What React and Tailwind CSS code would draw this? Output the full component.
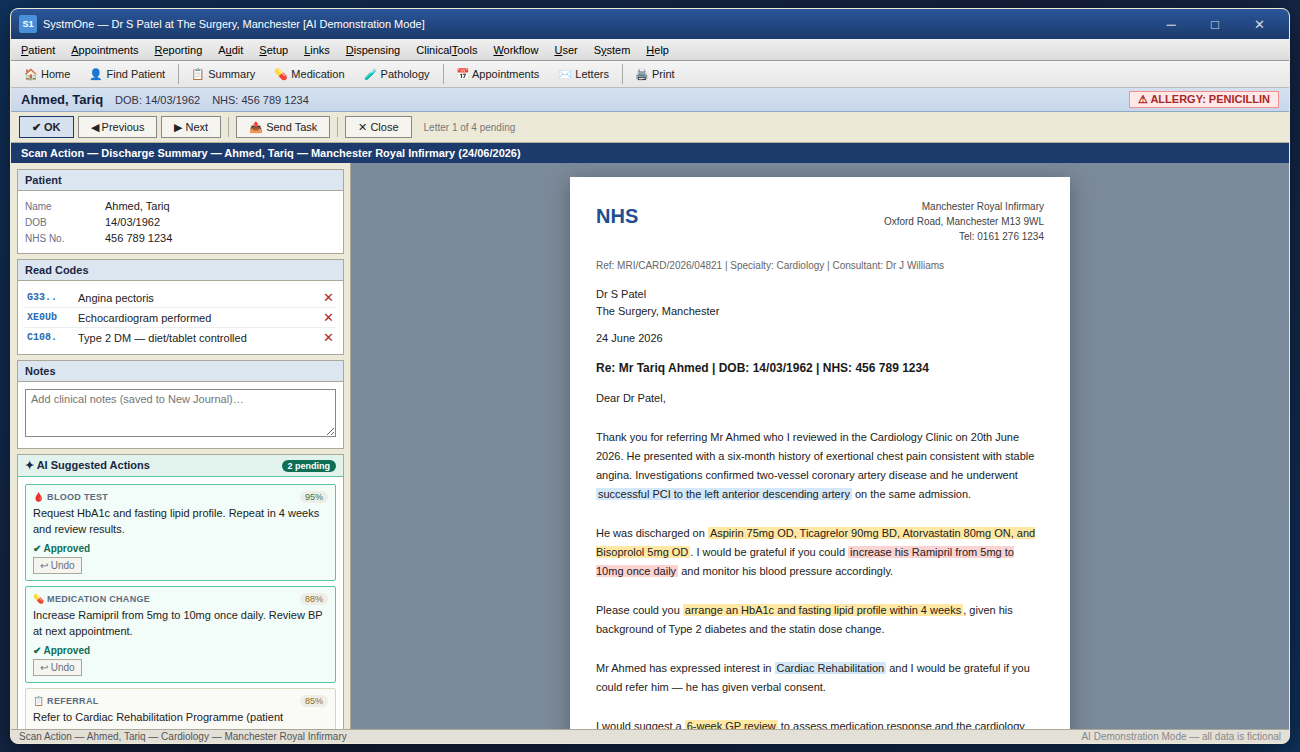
// ── src/App.jsx ──────────────────────────────────────────
import { useState } from 'react'
import clsx from 'clsx'

// [text before the access key, access key, rest]
const MENUS = [
  ['', 'P', 'atient'],
  ['', 'A', 'ppointments'],
  ['', 'R', 'eporting'],
  ['A', 'u', 'dit'],
  ['', 'S', 'etup'],
  ['', 'L', 'inks'],
  ['', 'D', 'ispensing'],
  ['Clinical', 'T', 'ools'],
  ['', 'W', 'orkflow'],
  ['', 'U', 'ser'],
  ['S', 'y', 'stem'],
  ['', 'H', 'elp'],
]

const TOOL_GROUPS = [
  ['🏠 Home', '👤 Find Patient'],
  ['📋 Summary', '💊 Medication', '🧪 Pathology'],
  ['📅 Appointments', '✉️ Letters'],
  ['🖨️ Print'],
]

const PATIENT = [
  ['Name', 'Ahmed, Tariq'],
  ['DOB', '14/03/1962'],
  ['NHS No.', '456 789 1234'],
]

const READ_CODES = [
  { code: 'G33..', term: 'Angina pectoris' },
  { code: 'XE0Ub', term: 'Echocardiogram performed' },
  { code: 'C108.', term: 'Type 2 DM — diet/tablet controlled' },
]

const ACTIONS = [
  {
    id: 1,
    type: '🩸 BLOOD TEST',
    score: 95,
    text: 'Request HbA1c and fasting lipid profile. Repeat in 4 weeks and review results.',
    approved: true,
  },
  {
    id: 2,
    type: '💊 MEDICATION CHANGE',
    score: 88,
    text: 'Increase Ramipril from 5mg to 10mg once daily. Review BP at next appointment.',
    approved: true,
  },
  {
    id: 3,
    type: '📋 REFERRAL',
    score: 85,
    text: 'Refer to Cardiac Rehabilitation Programme (patient consented).',
    approved: false,
  },
]

function TitleBar() {
  return (
    <header className="flex h-[30px] shrink-0 items-center gap-1.5 bg-linear-to-b from-[#2a5699] to-[#1c3a6b] px-2 text-white">
      <span className="flex size-[18px] items-center justify-center rounded-xs bg-[#4a90d9] text-[9px] font-bold">
        S1
      </span>
      <h1 className="flex-1 truncate">
        SystmOne — Dr S Patel at The Surgery, Manchester [AI Demonstration Mode]
      </h1>
      <div className="flex h-full text-[13px] text-white/80">
        <button type="button" aria-label="Minimise" className="w-11">─</button>
        <button type="button" aria-label="Maximise" className="w-11">□</button>
        <button type="button" aria-label="Close window" className="w-11">✕</button>
      </div>
    </header>
  )
}

function MenuBar() {
  return (
    <nav className="flex h-[22px] shrink-0 items-center border-b border-[#999] bg-linear-to-b from-[#f0f0f0] to-[#dcdcdc] px-0.5 pt-0.5 text-black">
      {MENUS.map(([before, key, after]) => (
        <button key={before + key + after} type="button" className="px-2">
          {before}
          <u>{key}</u>
          {after}
        </button>
      ))}
    </nav>
  )
}

function ToolBar() {
  return (
    <div className="flex h-[27px] shrink-0 items-center gap-0.5 border-b border-[#bbb] bg-linear-to-b from-[#f5f5f5] to-[#e6e6e6] px-1">
      {TOOL_GROUPS.map((group, i) => (
        <div key={group[0]} className="flex items-center gap-px">
          {i > 0 && <span className="mx-0.5 h-5 w-px bg-[#aaa]" />}
          {group.map((label) => (
            <button key={label} type="button" className="px-[9px]">
              {label}
            </button>
          ))}
        </div>
      ))}
    </div>
  )
}

function PatientBar() {
  return (
    <div className="flex h-6 shrink-0 items-center justify-between border-b border-[#8fa8c8] bg-linear-to-b from-[#d6e1f0] to-[#c6d7ea] px-2.5 text-[#334]">
      <div className="flex items-baseline gap-3">
        <strong className="text-[13px] text-[#12203c]">Ahmed, Tariq</strong>
        <span>DOB: 14/03/1962</span>
        <span>NHS: 456 789 1234</span>
      </div>
      <strong className="border border-[#f09090] bg-[#ffe8e8] px-2 leading-[15px] text-[#a82828]">
        ⚠ ALLERGY: PENICILLIN
      </strong>
    </div>
  )
}

function ActionButton({ primary, children }) {
  return (
    <button
      type="button"
      className={clsx(
        'h-[22px] border px-3',
        primary
          ? 'border-[#1c3a6b] bg-[#d6e1f0] font-bold'
          : 'border-[#888] bg-[#f5f4ee]'
      )}
    >
      {children}
    </button>
  )
}

function ActionBar() {
  return (
    <div className="flex h-[31px] shrink-0 items-center gap-1 border-b border-[#b5b099] bg-[#ece9d8] px-2">
      <ActionButton primary>✔ OK</ActionButton>
      <ActionButton>◀ Previous</ActionButton>
      <ActionButton>▶ Next</ActionButton>
      <span className="mx-[3px] h-5 w-px bg-[#aaa]" />
      <ActionButton>📤 Send Task</ActionButton>
      <span className="mx-[3px] h-5 w-px bg-[#aaa]" />
      <ActionButton>✕ Close</ActionButton>
      <span className="ml-2 text-[10px] text-[#777]">Letter 1 of 4 pending</span>
    </div>
  )
}

function Panel({ title, children }) {
  return (
    <section className="shrink-0 border border-[#aca899] bg-white">
      <h2 className="h-[21px] border-b border-[#aca899] bg-[#dce6f0] px-[7px] leading-5 font-bold text-[#1a2744]">
        {title}
      </h2>
      <div className="p-[7px]">{children}</div>
    </section>
  )
}

function ReadCodes() {
  const [codes, setCodes] = useState(READ_CODES)

  return (
    <table className="w-full border-separate border-spacing-0">
      <tbody>
        {codes.map(({ code, term }) => (
          <tr
            key={code}
            className="h-5 last:h-[19px] [&>td]:border-b [&>td]:border-[#eee] last:[&>td]:border-b-0"
          >
            <td className="w-[53px] pl-0.5 font-['Liberation_Mono',monospace] text-[10px] leading-3 font-bold text-[#2a6ab0]">
              {code}
            </td>
            <td className="leading-4">{term}</td>
            <td className="w-5 pr-0.5 text-right leading-4">
              <button
                type="button"
                aria-label={`Remove ${term}`}
                className="block w-full text-right text-[13px] leading-4 text-[#b02a2a]"
                onClick={() => setCodes(codes.filter((c) => c.code !== code))}
              >
                ✕
              </button>
            </td>
          </tr>
        ))}
      </tbody>
    </table>
  )
}

function ActionCard({ action, onToggle }) {
  const { type, score, text, approved } = action

  return (
    <li
      className={clsx(
        'rounded-xs border px-[7px] py-1.5',
        approved ? 'border-[#5bc4a0] bg-[#f2fdf9]' : 'border-[#d8d5c4] bg-[#fafaf6]'
      )}
    >
      <div className="mb-0.5 flex h-3 items-center justify-between text-[9px] leading-3">
        <span className="font-bold tracking-[0.3px] text-[#5a6a80]">{type}</span>
        <span
          className={clsx(
            'rounded-full bg-[#eeede6] px-[5px]',
            score >= 90 ? 'text-[#2f7a5a]' : 'text-[#92701a]'
          )}
        >
          {score}%
        </span>
      </div>
      <p className="leading-4">{text}</p>
      {approved && (
        <p className="mt-[5px] text-[10px] leading-[13px] font-bold text-[#0f6e56]">✔ Approved</p>
      )}
      <button
        type="button"
        onClick={onToggle}
        className="mt-0.5 block h-[17px] border border-[#aca899] bg-[#f5f4ee] px-1.5 text-[10px] leading-[15px] text-[#667085]"
      >
        {approved ? '↩ Undo' : '✔ Approve'}
      </button>
    </li>
  )
}

function SuggestedActions() {
  const [actions, setActions] = useState(ACTIONS)

  const toggle = (id) =>
    setActions(actions.map((a) => (a.id === id ? { ...a, approved: !a.approved } : a)))

  return (
    <section className="shrink-0 border border-[#aca899] bg-white">
      <div className="flex h-[22px] items-center justify-between border-b border-[#5bc4a0] bg-[#e1f3ec] px-[7px]">
        <h2 className="font-bold text-[#1a2744]">✦ AI Suggested Actions</h2>
        <span className="rounded-full bg-[#0f6e56] px-1.5 text-[9px] leading-3 font-bold text-white">
          2 pending
        </span>
      </div>
      <ul className="space-y-[5px] p-[7px]">
        {actions.map((action) => (
          <ActionCard key={action.id} action={action} onToggle={() => toggle(action.id)} />
        ))}
      </ul>
    </section>
  )
}

function Sidebar() {
  return (
    <aside className="flex w-[340px] shrink-0 flex-col gap-[5px] overflow-y-auto border-r border-[#aca899] bg-[#ece9d8] p-1.5 [scrollbar-width:none]">
      <Panel title="Patient">
        <dl>
          {PATIENT.map(([label, value]) => (
            <div key={label} className="flex h-4 items-baseline leading-4">
              <dt className="w-20 text-[10px] text-[#667085]">{label}</dt>
              <dd>{value}</dd>
            </div>
          ))}
        </dl>
      </Panel>
      <Panel title="Read Codes">
        <ReadCodes />
      </Panel>
      <Panel title="Notes">
        <textarea
          aria-label="Notes"
          placeholder="Add clinical notes (saved to New Journal)…"
          className="mb-1 block h-12 w-full resize-y border border-[#888] bg-white px-[5px] py-[3px] placeholder:text-[#757575]"
        />
      </Panel>
      <SuggestedActions />
    </aside>
  )
}

const MARKS = {
  blue: 'bg-[#d4e8fc]',
  amber: 'bg-[#ffe8a3]',
  red: 'bg-[#fbd3d3]',
}

function Mark({ tone, children }) {
  return <mark className={clsx('rounded-[1px] px-0.5 text-inherit', MARKS[tone])}>{children}</mark>
}

function Letter() {
  return (
    <article className="mx-auto w-full max-w-[500px] bg-white px-[26px] py-[22px] text-[#222] shadow-[0_4px_20px_rgba(0,0,0,0.3)]">
      <div className="flex items-start justify-between">
        <span className="text-xl leading-[34px] font-bold text-[#1d4f91]">NHS</span>
        <address className="text-right text-[10px] leading-[15px] text-[#444] not-italic">
          Manchester Royal Infirmary
          <br />
          Oxford Road, Manchester M13 9WL
          <br />
          Tel: 0161 276 1234
        </address>
      </div>
      <p className="mt-3.5 text-[10px] leading-4 text-[#666]">
        Ref: MRI/CARD/2026/04821 | Specialty: Cardiology | Consultant: Dr J Williams
      </p>
      <p className="mt-3 leading-[17px]">
        Dr S Patel
        <br />
        The Surgery, Manchester
      </p>
      <p className="mt-2.5 leading-[17px]">24 June 2026</p>
      <h2 className="mt-3 text-xs leading-[19px] font-bold text-[#1a1a1a]">
        Re: Mr Tariq Ahmed | DOB: 14/03/1962 | NHS: 456 789 1234
      </h2>
      <div className="mt-[11px] space-y-5 leading-[19px]">
        <p>Dear Dr Patel,</p>
        <p>
          Thank you for referring Mr Ahmed who I reviewed in the Cardiology Clinic on 20th June
          2026. He presented with a six-month history of exertional chest pain consistent with
          stable angina. Investigations confirmed two-vessel coronary artery disease and he
          underwent <Mark tone="blue">successful PCI to the left anterior descending artery</Mark>{' '}
          on the same admission.
        </p>
        <p>
          He was discharged on{' '}
          <Mark tone="amber">
            Aspirin 75mg OD, Ticagrelor 90mg BD, Atorvastatin 80mg ON, and Bisoprolol 5mg OD
          </Mark>
          . I would be grateful if you could{' '}
          <Mark tone="red">increase his Ramipril from 5mg to 10mg once daily</Mark> and monitor his
          blood pressure accordingly.
        </p>
        <p>
          Please could you{' '}
          <Mark tone="amber">arrange an HbA1c and fasting lipid profile within 4 weeks</Mark>, given
          his background of Type 2 diabetes and the statin dose change.
        </p>
        <p>
          Mr Ahmed has expressed interest in <Mark tone="blue">Cardiac Rehabilitation</Mark> and I
          would be grateful if you could refer him — he has given verbal consent.
        </p>
        <p>
          I would suggest a <Mark tone="amber">6-week GP review</Mark> to assess medication response
          and the cardiology team will see him again in clinic.
        </p>
        <p>Yours sincerely,</p>
      </div>
    </article>
  )
}

export default function App() {
  return (
    <div className="h-screen bg-linear-135 from-[#0f3460] via-[#16213e] to-[#0f3460] px-2.5 py-2 font-['Liberation_Sans',Arial,sans-serif] text-[11px] leading-[13px] text-[#222]">
      <div className="flex h-full flex-col overflow-hidden rounded-lg border border-[#ece9d8] bg-[#ece9d8] shadow-[0_8px_40px_rgba(0,0,0,0.6)]">
        <TitleBar />
        <MenuBar />
        <ToolBar />
        <PatientBar />
        <ActionBar />
        <div className="h-5 shrink-0 bg-[#1c3a6b] px-2.5 leading-5 font-bold text-white">
          Scan Action — Discharge Summary — Ahmed, Tariq — Manchester Royal Infirmary (24/06/2026)
        </div>
        <div className="flex min-h-0 flex-1">
          <Sidebar />
          <main className="flex-1 overflow-y-auto bg-[#7b8a9a] py-3.5 [scrollbar-width:none]">
            <Letter />
          </main>
        </div>
        <footer className="flex h-3.5 shrink-0 justify-between border-t border-[#aca899] bg-[#e3e0d8] px-2 text-[10px] leading-[13px] text-[#555]">
          <span>Scan Action — Ahmed, Tariq — Cardiology — Manchester Royal Infirmary</span>
          <span className="text-[#888]">AI Demonstration Mode — all data is fictional</span>
        </footer>
      </div>
    </div>
  )
}
